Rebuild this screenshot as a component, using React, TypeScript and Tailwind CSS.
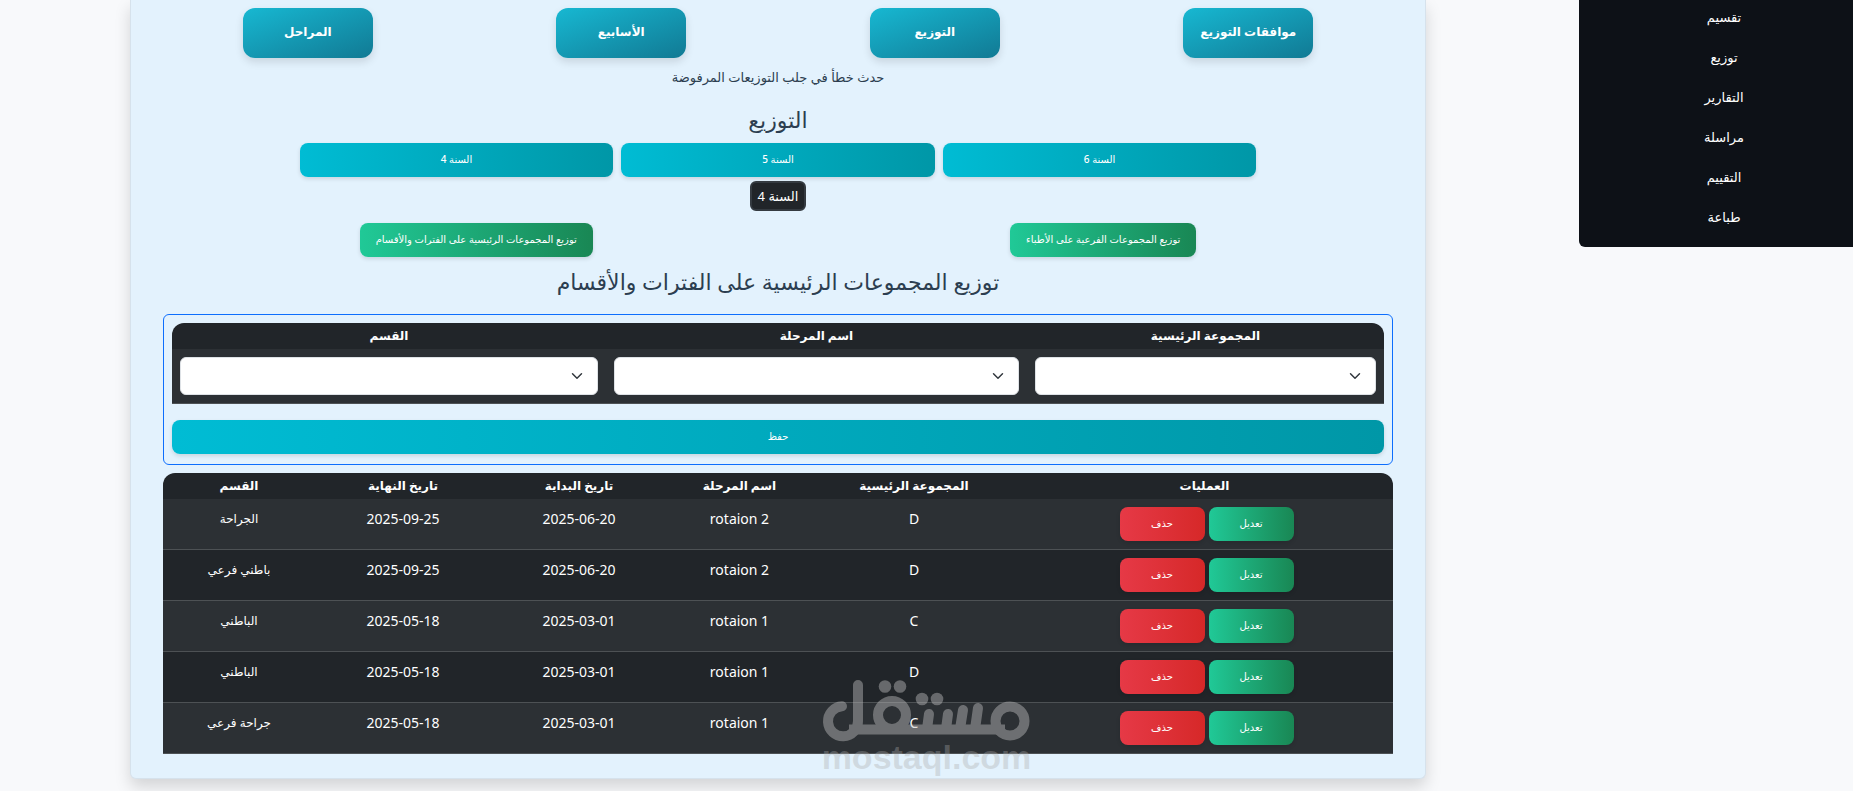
import type { ReactNode } from "react";

const navItems = ["تقسيم", "توزيع", "التقارير", "مراسلة", "التقييم", "طباعة"];
const tabs = ["موافقات التوزيع", "التوزيع", "الأسابيع", "المراحل"];
const years = ["السنة 6", "السنة 5", "السنة 4"];

const formColumns = [
  { id: "group", label: "المجموعة الرئيسية", width: "w-[357px]" },
  { id: "stage", label: "اسم المرحلة", width: "w-[421px]" },
  { id: "section", label: "القسم", width: "w-[434px]" },
];

const columns = [
  { label: "العمليات", width: "w-[377px]" },
  { label: "المجموعة الرئيسية", width: "w-[204px]" },
  { label: "اسم المرحلة", width: "w-[145px]" },
  { label: "تاريخ البداية", width: "w-[176px]" },
  { label: "تاريخ النهاية", width: "w-[176px]" },
  { label: "القسم", width: "w-[152px]" },
];

const rows = [
  { group: "D", stage: "rotaion 2", start: "2025-06-20", end: "2025-09-25", section: "الجراحة" },
  { group: "D", stage: "rotaion 2", start: "2025-06-20", end: "2025-09-25", section: "باطني فرعي" },
  { group: "C", stage: "rotaion 1", start: "2025-03-01", end: "2025-05-18", section: "الباطني" },
  { group: "D", stage: "rotaion 1", start: "2025-03-01", end: "2025-05-18", section: "الباطني" },
  { group: "C", stage: "rotaion 1", start: "2025-03-01", end: "2025-05-18", section: "جراحة فرعي" },
];

const tones = {
  cyan: "from-[#00bcd4] to-[#0097a7]",
  green: "from-[#20c997] to-[#198754]",
  red: "from-[#e63946] to-[#d62828]",
};

function ActionButton({
  tone,
  className = "",
  children,
}: {
  tone: keyof typeof tones;
  className?: string;
  children: ReactNode;
}) {
  return (
    <button
      type="button"
      className={`h-[34px] rounded-lg bg-linear-to-r pb-0.5 text-[10px] font-medium whitespace-nowrap text-white shadow-[0_2px_4px_rgba(0,0,0,0.12)] ${tones[tone]} ${className}`}
    >
      {children}
    </button>
  );
}

function Watermark() {
  return (
    <div className="pointer-events-none absolute top-[678px] left-1/2 flex w-[212px] -translate-x-1/2 flex-col items-center">
      <svg viewBox="0 0 212 64" className="h-16 w-[212px] opacity-45" role="img" aria-label="مستقل">
        <g fill="none" stroke="#bdbdbd" strokeWidth="10" strokeLinecap="round">
          <circle cx="189" cy="43" r="14.5" />
          <circle cx="71" cy="37" r="14" />
          <path d="M21 28.3A15 15 0 1 0 37 43V7" />
          <path d="M28 51.500H184" strokeLinecap="butt" />
          <path d="M108 36L106 51M127 36L125 51M142 32L139 51M157 30L154 51" />
        </g>
        <g fill="#bdbdbd">
          <circle cx="64" cy="8.500" r="6.300" />
          <circle cx="79" cy="8.500" r="6.300" />
          <circle cx="101" cy="21" r="6.300" />
          <circle cx="116" cy="21" r="6.300" />
        </g>
      </svg>
      <span
        dir="ltr"
        className="font-['Liberation_Sans',sans-serif] text-[34px] leading-[30px] font-bold text-[#aaaaaa]/35"
      >
        mostaql.com
      </span>
    </div>
  );
}

export default function App() {
  return (
    <div
      dir="rtl"
      className="relative flex min-h-screen items-start bg-[#f8f9fb] font-['Noto_Sans','DejaVu_Sans',sans-serif] text-sm text-[#2c3e50]"
    >
      <nav className="w-[274px] shrink-0 rounded-bl-md bg-[#0d1117] pb-[10px] pl-4">
        <ul className="-mt-[3px]">
          {navItems.map((item) => (
            <li key={item}>
              <a href="#" className="block h-10 text-center text-[13px] leading-10 text-white">
                {item}
              </a>
            </li>
          ))}
        </ul>
      </nav>

      <main className="min-w-0 flex-1 pr-[153px] pl-[130px]">
        <div className="flex flex-col rounded-b-md border border-t-0 border-[#d6e2ec] bg-[#e3f2fd] px-8 pt-2 pb-6 shadow-[0_8px_16px_rgba(0,0,0,0.15)]">
          <div className="-mx-3 flex justify-around">
            {tabs.map((tab) => (
              <button
                key={tab}
                type="button"
                className="h-[50px] w-[130px] rounded-xl bg-linear-to-br from-[#17b8d2] to-[#117a94] pb-0.5 text-xs font-bold whitespace-nowrap text-white shadow-[0_4px_8px_rgba(0,0,0,0.12)]"
              >
                {tab}
              </button>
            ))}
          </div>

          <p className="mt-[7px] text-center text-[13px] leading-6">حدث خطأ في جلب التوزيعات المرفوضة</p>

          <h2 className="mt-4 text-center text-[22px] leading-7">التوزيع</h2>

          <div className="mt-[10px] grid w-7/9 grid-cols-3 gap-2 self-center">
            {years.map((year) => (
              <ActionButton key={year} tone="cyan">
                {year}
              </ActionButton>
            ))}
          </div>

          <span className="mt-1 flex h-[30px] items-center self-center rounded-md border-2 border-[#343a40] bg-[#212529] px-1.5 text-[13px] text-white">
            السنة 4
          </span>

          <div className="-mx-3 mt-3 flex justify-around">
            <ActionButton tone="green" className="px-4">
              توزيع المجموعات الفرعية على الأطباء
            </ActionButton>
            <ActionButton tone="green" className="px-4">
              توزيع المجموعات الرئيسية على الفترات والأقسام
            </ActionButton>
          </div>

          <h1 className="mt-2 text-center text-[22px] leading-8">
            توزيع المجموعات الرئيسية على الفترات والأقسام
          </h1>

          <form className="mt-[17px] rounded-md border border-[#0d6efd] p-2 pb-[10px]">
            <div className="overflow-hidden rounded-t-xl">
              <table className="w-full table-fixed text-white">
                <thead>
                  <tr className="bg-[#212529]">
                    {formColumns.map((column) => (
                      <th
                        key={column.id}
                        scope="col"
                        className={`h-[26px] p-0 text-xs leading-6 font-bold ${column.width}`}
                      >
                        <label htmlFor={column.id}>{column.label}</label>
                      </th>
                    ))}
                  </tr>
                </thead>
                <tbody>
                  <tr className="border-b border-[#4d5154] bg-[#2c3034]">
                    {formColumns.map((column) => (
                      <td key={column.id} className="p-2">
                        <div className="relative">
                          <select
                            id={column.id}
                            defaultValue=""
                            className="block h-[38px] w-full appearance-none rounded-md border border-[#dee2e6] bg-white px-3 text-[#212529]"
                          >
                            <option value="" />
                          </select>
                          <svg
                            viewBox="0 0 16 16"
                            className="pointer-events-none absolute top-[13px] right-[15px] size-3"
                            aria-hidden="true"
                          >
                            <path
                              d="m2 5 6 6 6-6"
                              fill="none"
                              stroke="#343a40"
                              strokeWidth="2"
                              strokeLinecap="round"
                              strokeLinejoin="round"
                            />
                          </svg>
                        </div>
                      </td>
                    ))}
                  </tr>
                </tbody>
              </table>
            </div>
            <ActionButton tone="cyan" className="mt-4 block w-full">
              حفظ
            </ActionButton>
          </form>

          <div className="mt-2 overflow-hidden rounded-t-xl">
            <table className="w-full table-fixed text-center text-white">
              <thead>
                <tr className="bg-[#212529]">
                  {columns.map((column) => (
                    <th
                      key={column.label}
                      scope="col"
                      className={`h-[26px] p-0 text-xs leading-6 font-bold ${column.width}`}
                    >
                      {column.label}
                    </th>
                  ))}
                </tr>
              </thead>
              <tbody>
                {rows.map((row, index) => (
                  <tr
                    key={index}
                    className="border-b border-[#4d5154] bg-[#212529] align-top leading-6 odd:bg-[#2c3034]"
                  >
                    <td className="py-2 pl-1">
                      <div className="flex justify-center gap-1">
                        <ActionButton tone="green" className="w-[85px]">
                          تعديل
                        </ActionButton>
                        <ActionButton tone="red" className="w-[85px]">
                          حذف
                        </ActionButton>
                      </div>
                    </td>
                    <td className="py-2">{row.group}</td>
                    <td className="py-2" dir="ltr">
                      {row.stage}
                    </td>
                    <td className="py-2" dir="ltr">
                      {row.start}
                    </td>
                    <td className="py-2" dir="ltr">
                      {row.end}
                    </td>
                    <td className="py-2 text-xs leading-6">{row.section}</td>
                  </tr>
                ))}
              </tbody>
            </table>
          </div>
        </div>
      </main>

      <Watermark />
    </div>
  );
}
